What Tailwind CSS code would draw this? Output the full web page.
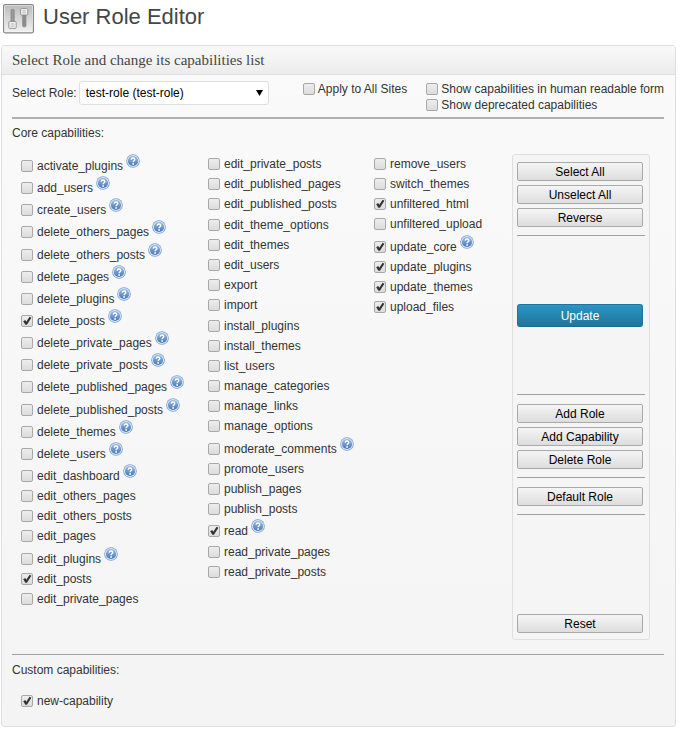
<!DOCTYPE html>
<html lang="en">
<head>
<meta charset="utf-8">
<title>User Role Editor</title>
<script src="https://cdn.jsdelivr.net/npm/@tailwindcss/browser@4"></script>
</head>
<body class="bg-white font-['Liberation_Sans',Arial,sans-serif] text-xs text-[#333]">
<svg width="0" height="0" class="absolute" aria-hidden="true">
  <defs>
    <linearGradient id="helpFill" x1="0" y1="0" x2="0" y2="1"><stop offset="0" stop-color="#9dbde2"/><stop offset="1" stop-color="#4576b8"/></linearGradient>
    <symbol id="help" viewBox="0 0 14 14">
      <circle cx="7" cy="7" r="6.8" fill="#7ba2d2"/>
      <circle cx="7" cy="7" r="6" fill="#dbe8f6"/>
      <circle cx="7" cy="7" r="5.1" fill="url(#helpFill)"/>
      <path d="M5.2 5.6C5.3 3.4 8.8 3.5 8.8 5.5C8.8 6.7 7.1 6.7 7.1 8.2" fill="none" stroke="#fff" stroke-width="1.4"/>
      <circle cx="7.1" cy="10" r=".9" fill="#fff"/>
    </symbol>
  </defs>
</svg>

<header class="flex h-[45px] items-start gap-[9px] pt-[3px] pl-[3px]">
  <svg class="mt-px h-[30px] w-[31px] shrink-0" viewBox="0 0 31 30" aria-hidden="true">
    <defs><linearGradient id="tile" x1="0" y1="0" x2="0" y2="1"><stop offset="0" stop-color="#bdbdbd"/><stop offset="1" stop-color="#efefef"/></linearGradient></defs>
    <rect x=".6" y=".6" width="29.8" height="28.2" rx="1.5" fill="#f8f8f8" stroke="#858585" stroke-width="1.2"/>
    <rect x="2" y="2" width="27" height="25.4" fill="url(#tile)"/>
    <g stroke="#858585" stroke-width=".8">
      <rect x="8" y="5.5" width="3.2" height="14" rx="1" fill="#9a9a9a"/>
      <rect x="19.7" y="9" width="3.2" height="13.8" rx="1" fill="#8c8c8c"/>
      <rect x="5.8" y="17.4" width="7.4" height="7" rx="1" fill="#f0f0f0"/>
      <rect x="17.6" y="4.6" width="7.2" height="6.4" rx="1" fill="#f0f0f0"/>
      <path d="M7.6 20h3.8M7.6 22.2h3.8M19.3 6.9h3.8M19.3 8.9h3.8" stroke="#b0b0b0"/>
    </g>
  </svg>
  <h1 class="text-[22px] leading-7 text-[#464646]">User Role Editor</h1>
</header>

<main class="mr-1 ml-px rounded-[3px] border border-[#dfdfdf] bg-linear-to-b from-[#fafafa] to-[#f4f4f4]">
  <h2 class="h-[29px] border-b border-[#dfdfdf] bg-linear-to-b from-[#f9f9f9] to-[#ececec] pl-2.5 font-['Liberation_Serif',Georgia,serif] text-[15px] leading-7 text-[#464646]">Select Role and change its capabilities list</h2>

  <form class="pr-[11px] pl-2.5">
    <div class="flex h-11 items-start border-b-2 border-[#b0b0b0] pt-[6px]">
      <label for="role" class="leading-6">Select Role:</label>
      <div class="relative ml-0.5">
        <select id="role" class="h-6 w-[190px] appearance-none rounded-[3px] border border-[#dfdfdf] bg-white pl-1.5 text-black"><option>test-role (test-role)</option></select>
        <svg class="pointer-events-none absolute top-2 right-1.5 h-2 w-[7px]" viewBox="0 0 7 8" aria-hidden="true"><path d="M0 1h7L3.5 7z" fill="#000"/></svg>
      </div>
      <div class="ml-auto flex gap-[19px]">
        <div data-caps="Apply to All Sites" data-row="h-4"></div>
        <div data-caps="Show capabilities in human readable form,Show deprecated capabilities" data-row="h-4"></div>
      </div>
    </div>

    <h3 class="pt-1 leading-5">Core capabilities:</h3>
    <div class="mt-[11px] grid grid-cols-[187fr_166fr_138fr_138px] items-start pr-[14px] pl-[9px]">
      <div class="flex min-h-[455px] flex-col justify-between" data-caps="activate_plugins?,add_users?,create_users?,delete_others_pages?,delete_others_posts?,delete_pages?,delete_plugins?,delete_posts?+,delete_private_pages?,delete_private_posts?,delete_published_pages?,delete_published_posts?,delete_themes?,delete_users?,edit_dashboard?,edit_others_pages,edit_others_posts,edit_pages,edit_plugins?,edit_posts+,edit_private_pages"></div>
      <div class="flex min-h-[428px] flex-col justify-between" data-caps="edit_private_posts,edit_published_pages,edit_published_posts,edit_theme_options,edit_themes,edit_users,export,import,install_plugins,install_themes,list_users,manage_categories,manage_links,manage_options,moderate_comments?,promote_users,publish_pages,publish_posts,read?+,read_private_pages,read_private_posts"></div>
      <div class="flex min-h-[163px] flex-col justify-between" data-caps="remove_users,switch_themes,unfiltered_html+,unfiltered_upload,update_core?+,update_plugins+,update_themes+,upload_files+"></div>

      <div class="rounded-[3px] border border-[#dfdfdf] bg-[#f5f5f5] pt-[7px] pr-1 pb-1.5 pl-1 [&>div]:flex [&>div]:flex-col [&>div]:gap-1 [&>div]:pr-0.5 [&_button]:h-[19px] [&_button]:rounded-[2px] [&_button]:border [&_button]:border-[#a9a9a9] [&_button]:bg-linear-to-b [&_button]:from-[#f5f5f5] [&_button]:to-[#dddddd] [&_button]:leading-4 [&_button]:text-black [&_hr]:border-[#a0a0a0]">
        <div>
          <button type="button">Select All</button>
          <button type="button">Unselect All</button>
          <button type="button">Reverse</button>
        </div>
        <hr class="mt-2">
        <div class="pt-[68px] pb-[67px]">
          <input type="submit" value="Update" class="h-[23px] rounded-[3px] border border-[#21759b] border-b-[#1e6a8d] bg-linear-to-b from-[#2a95c5] to-[#21759b] leading-5 text-white">
        </div>
        <hr>
        <div class="pt-[9px] pb-2">
          <button type="button">Add Role</button>
          <button type="button">Add Capability</button>
          <button type="button">Delete Role</button>
        </div>
        <hr>
        <div class="pt-[9px] pb-2">
          <button type="button">Default Role</button>
        </div>
        <hr>
        <div class="pt-[99px]">
          <button type="reset">Reset</button>
        </div>
      </div>
    </div>

    <hr class="mt-[14px] border-[#a0a0a0]">
    <h3 class="pt-[5px] leading-5">Custom capabilities:</h3>
    <div class="mt-[11px] pb-[15px] pl-[9px]" data-caps="new-capability+"></div>
  </form>
</main>

<script>
// Each entry is a capability name, followed by "?" for a help link and "+" when granted.
document.querySelectorAll('[data-caps]').forEach(list => {
  const compact = Boolean(list.dataset.row);
  list.dataset.caps.split(',').forEach(entry => {
    const name = entry.replace(/[?+]+$/, '');
    const help = entry.includes('?');
    const id = 'cap-' + name.replace(/\s+/g, '-');
    const row = document.createElement('div');
    row.className = 'flex ' + (compact ? 'h-4 items-center' : help ? 'h-[22px] items-end' : 'h-5 items-end');
    row.innerHTML = `
      <span class="relative h-3 w-3 ${compact ? '' : 'mb-1'}">
        <input type="checkbox" id="${id}" ${entry.includes('+') ? 'checked' : ''} class="peer block h-3 w-3 appearance-none rounded-[2px] border border-[#a8a8a8] bg-linear-to-b from-[#ededed] to-[#dcdcdc]">
        <svg class="pointer-events-none absolute top-0 left-0 hidden h-3 w-3 peer-checked:block" viewBox="0 0 12 12" aria-hidden="true"><path d="M2.2 6.2L4.2 5L5.3 6.8L8.6 1.7L10.4 2.7L5.9 9.8H4.4Z" fill="#333"/></svg>
      </span>
      <label for="${id}" class="whitespace-nowrap ${compact ? 'ml-[3px] leading-4' : 'ml-1 leading-5'}">${name}</label>
      ${help ? `<a href="#" aria-label="Help: ${name}" class="ml-[3px] self-start"><svg class="block h-[14px] w-[14px]"><use href="#help"/></svg></a>` : ''}`;
    list.append(row);
  });
});
</script>
</body>
</html>
